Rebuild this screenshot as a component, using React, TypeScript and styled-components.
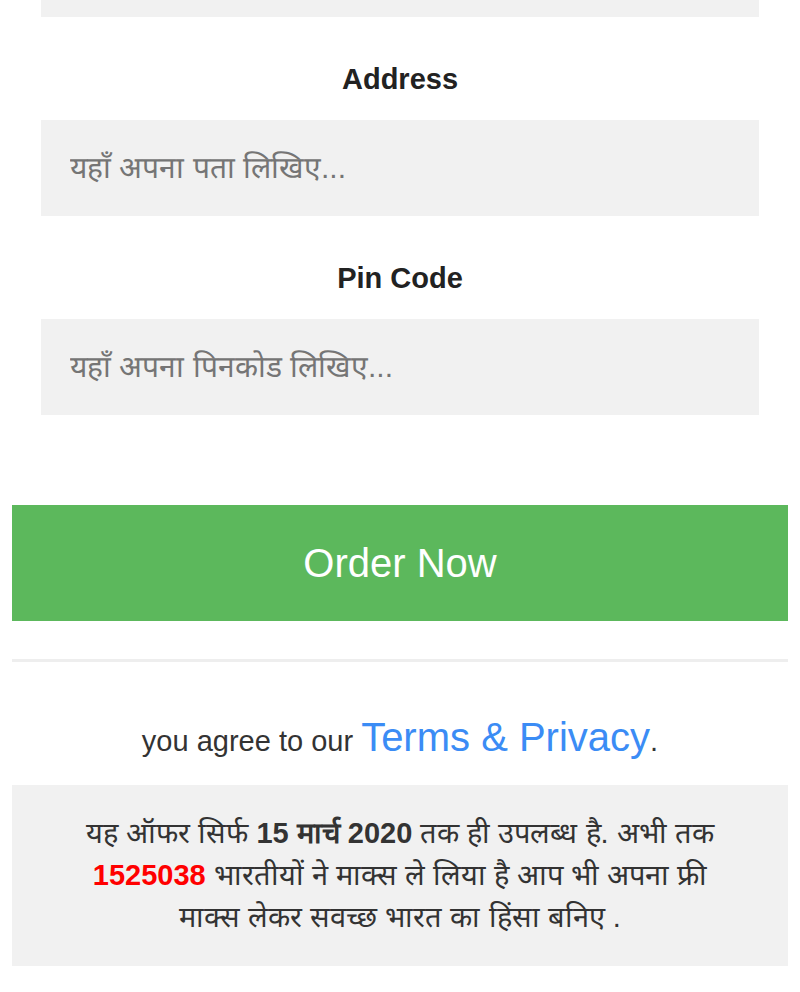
import styled, { createGlobalStyle } from "styled-components";

const GlobalStyle = createGlobalStyle`
  body {
    margin: 0;
    background: #fff;
    font-family: "Liberation Sans", Arial, sans-serif;
    color: #222;
  }
`;

const fields = [
  { id: "name", label: "Name", placeholder: "यहाँ अपना नाम लिखिए...", cut: true },
  { id: "address", label: "Address", placeholder: "यहाँ अपना पता लिखिए..." },
  { id: "pin", label: "Pin Code", placeholder: "यहाँ अपना पिनकोड लिखिए..." },
];

const App = () => {
  return (
    <Page>
      <GlobalStyle />
      <Form onSubmit={(e) => e.preventDefault()}>
        {fields.map((f) => (
          <Field key={f.id} $cut={f.cut}>
            {!f.cut && <Label htmlFor={f.id}>{f.label}</Label>}
            <Input id={f.id} placeholder={f.placeholder} />
          </Field>
        ))}
        <OrderButton type="submit">Order Now</OrderButton>
      </Form>
      <Divider />
      <Agree>
        you agree to our <TermsLink href="#">Terms &amp; Privacy</TermsLink>.
      </Agree>
      <Notice>
        यह ऑफर सिर्फ <b>15 मार्च 2020</b> तक ही उपलब्ध है. अभी तक{" "}
        <Count>1525038</Count> भारतीयों ने माक्स ले लिया है आप भी अपना फ्री
        माक्स लेकर सवच्छ भारत का हिंसा बनिए .
      </Notice>
    </Page>
  );
};
export default App;

const Page = styled.div`
  padding: 0 12px 25px;
  overflow: hidden;
`;

const Form = styled.form`
  display: flex;
  flex-direction: column;
`;

const Field = styled.div<{ $cut?: boolean }>`
  display: flex;
  flex-direction: column;
  padding: 0 29px;
  margin-top: ${(p) => (p.$cut ? "-79px" : "0")};
`;

const Label = styled.label`
  display: block;
  margin: 42px 0 21px;
  text-align: center;
  font-size: 29px;
  line-height: 40px;
  font-weight: bold;
  color: #222;
`;

const Input = styled.input`
  box-sizing: border-box;
  width: 100%;
  height: 96px;
  padding: 0 29px;
  border: none;
  outline: none;
  background: #f1f1f1;
  font-family: "Liberation Sans", Arial, sans-serif;
  font-size: 30px;
  color: #333;

  &::placeholder {
    color: #757575;
  }
`;

const OrderButton = styled.button`
  margin-top: 90px;
  height: 116px;
  width: 100%;
  border: none;
  background: #5cb85c;
  color: #fff;
  font-family: "Liberation Sans", Arial, sans-serif;
  font-size: 40px;
  cursor: pointer;
`;

const Divider = styled.hr`
  margin: 38px 0 0;
  border: none;
  border-top: 3px solid #eee;
`;

const Agree = styled.p`
  margin: 52px 0 21px;
  text-align: center;
  font-size: 29px;
  line-height: 46px;
  color: #333;
`;

const TermsLink = styled.a`
  font-size: 40px;
  color: #3b8cf5;
  text-decoration: none;
`;

const Notice = styled.div`
  padding: 27px 50px 28px;
  background: #f1f1f1;
  text-align: center;
  font-size: 29px;
  line-height: 42px;
  color: #333;

  b {
    font-weight: bold;
  }
`;

const Count = styled.b`
  color: #f00;
`;
